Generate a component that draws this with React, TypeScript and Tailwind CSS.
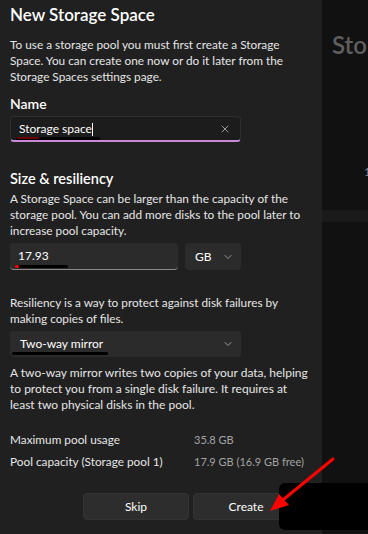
import { X, ChevronDown } from "lucide-react";

const font = { fontFamily: 'Lato, "Noto Sans", Arial, sans-serif' };

function Chevron() {
  return <ChevronDown className="w-[12px] h-[12px] text-[#bdbdbd]" strokeWidth={1.5} />;
}

export default function App() {
  return (
    <div className="relative w-[368px] h-[534px] flex overflow-hidden bg-[#111111]" style={font}>
      {/* dialog */}
      <div className="w-[322px] shrink-0 h-full bg-[#202020] px-[10px] text-[#e6e6e6] flex flex-col">
        <h1 className="pt-[3px] text-[17px] leading-[24px] font-semibold text-white">New Storage Space</h1>
        <p className="mt-[10px] text-[11.8px] leading-[16px]">
          To use a storage pool you must first create a Storage Space. You can create one now or do it later from the
          Storage Spaces settings page.
        </p>

        <h2 className="mt-[9px] text-[14px] leading-[20px] font-semibold text-white">Name</h2>
        <div className="mt-[2px] w-[231px] h-[26px] rounded-[4px] bg-[#1c1c1c] border border-[#2f2f2f] border-b-2 border-b-[#c88ad8] flex items-center pl-[8px] pr-[9px]">
          <span className="text-[12px] text-white flex-1">
            Storage space<span className="inline-block w-px h-[13px] bg-white align-middle" />
          </span>
          <X className="w-[12px] h-[12px] text-[#c8c8c8]" strokeWidth={1.5} />
        </div>

        <h2 className="mt-[26px] text-[14.5px] leading-[22px] font-semibold text-white">Size &amp; resiliency</h2>
        <p className="mt-[1px] text-[11.8px] leading-[16px]">
          A Storage Space can be larger than the capacity of the storage pool. You can add more disks to the pool later to
          increase pool capacity.
        </p>

        <div className="mt-[4px] flex gap-[7px]">
          <div className="w-[168px] h-[27px] rounded-[4px] bg-[#2b2b2b] border-b border-b-[#8a8a8a] flex items-center pl-[8px] text-[12px] text-white">
            17.93
          </div>
          <div className="w-[56px] h-[27px] rounded-[4px] bg-[#2b2b2b] flex items-center justify-between pl-[10px] pr-[7px] text-[12px] text-white">
            GB
            <Chevron />
          </div>
        </div>

        <p className="mt-[25px] text-[11.8px] leading-[16px]">
          Resiliency is a way to protect against disk failures by making copies of files.
        </p>
        <div className="mt-[4px] w-[231px] h-[26px] rounded-[4px] bg-[#2b2b2b] flex items-center justify-between pl-[10px] pr-[7px] text-[12px] text-white">
          Two-way mirror
          <Chevron />
        </div>

        <p className="mt-[8px] text-[12px] leading-[16px]">
          A two-way mirror writes two copies of your data, helping to protect you from a single disk failure. It requires at
          least two physical disks in the pool.
        </p>

        <div className="mt-[16px] grid grid-cols-[184px_1fr] text-[11.8px] leading-[22px] whitespace-nowrap">
          <span>Maximum pool usage</span>
          <span className="text-[#a3a3a3] text-[11px]">35.8 GB</span>
          <span>Pool capacity (Storage pool 1)</span>
          <span className="text-[#a3a3a3] text-[11px]">17.9 GB (16.9 GB free)</span>
        </div>

        <div className="mt-[20px] ml-[73px] flex gap-[4px]">
          <button className="w-[106px] h-[27px] rounded-[4px] bg-[#2d2d2d] border border-[#343434] text-[12px] text-white">
            Skip
          </button>
          <button className="w-[106px] h-[27px] rounded-[4px] bg-[#2d2d2d] border border-[#343434] text-[12px] text-white">
            Create
          </button>
        </div>
      </div>

      {/* background page */}
      <div className="flex-1 min-w-0 overflow-hidden relative">
        <div className="pt-[31px] pl-[10px] text-[24px] leading-[28px] font-semibold text-[#5f5f5f] whitespace-nowrap">
          Stor
        </div>
        <div className="mt-[105px] pl-[42px] text-[12px] leading-[16px] text-[#8a8a8a]">1</div>
        <div className="mt-[30px] h-[12px] bg-[#1a1a1a]" />
      </div>

      {/* annotations */}
      <div className="absolute left-[16px] top-[137px] w-[84px] h-[3px] rounded-full bg-black" />
      <div className="absolute left-[17px] top-[137px] w-[22px] h-[2px] rounded-full bg-[#6b0000]" />
      <div className="absolute left-[16px] top-[265px] w-[52px] h-[3px] rounded-full bg-black" />
      <div className="absolute left-[15px] top-[265px] w-[4px] h-[3px] rounded-full bg-[#ff0000]" />
      <div className="absolute left-[12px] top-[352px] w-[96px] h-[3px] rounded-full bg-black" />
      <div className="absolute left-[279px] top-[483px] w-[100px] h-[47px] rounded-[6px] bg-black" />
      <svg className="absolute left-0 top-0 pointer-events-none" width="368" height="534">
        <line x1="333" y1="459" x2="284" y2="499" stroke="#ff0000" strokeWidth="3" strokeLinecap="round" />
        <polygon points="270,511 279,494 289,505" fill="#ff0000" />
      </svg>
    </div>
  );
}
